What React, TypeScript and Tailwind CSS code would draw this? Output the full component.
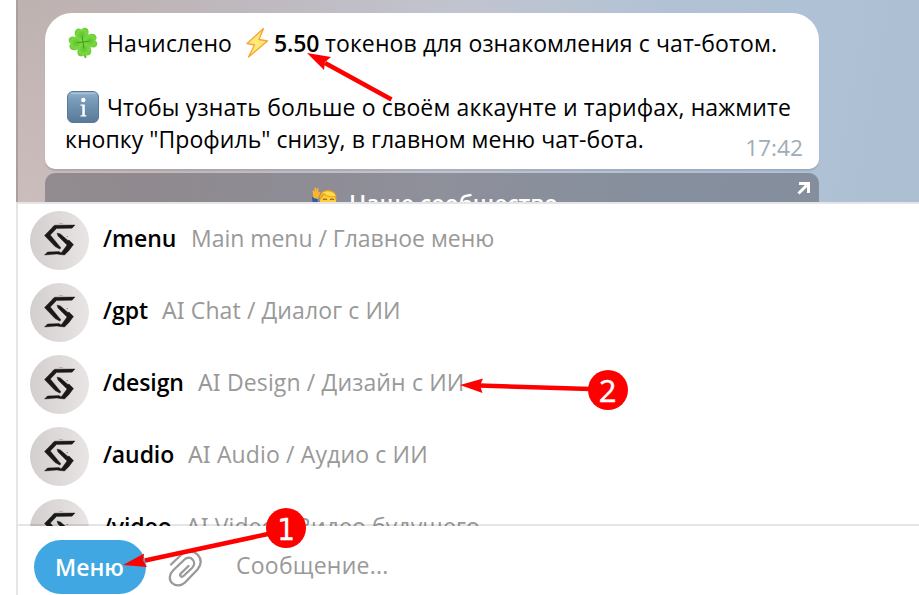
type Command = {
  name: string;
  nameClass: string;
  description: string;
  descriptionClass: string;
};

const COMMANDS: Command[] = [
  { name: '/menu', nameClass: 'w-[88px]', description: 'Main menu / Главное меню', descriptionClass: 'tracking-[-0.03px]' },
  { name: '/gpt', nameClass: 'w-[59px]', description: 'AI Chat / Диалог с ИИ', descriptionClass: 'tracking-[0.11px]' },
  { name: '/design', nameClass: 'w-[95px] tracking-[-0.1px]', description: 'AI Design / Дизайн с ИИ', descriptionClass: 'tracking-[0.14px]' },
  { name: '/audio', nameClass: 'w-[85px] tracking-[-0.1px]', description: 'AI Audio / Аудио с ИИ', descriptionClass: 'tracking-[0.14px]' },
  { name: '/video', nameClass: 'w-[83px] tracking-[-0.1px]', description: 'AI Video / Видео будущего', descriptionClass: 'tracking-[0.08px]' },
];

const CloverIcon = () => (
  <svg viewBox="0 0 30 32" className="h-8 w-[30px] shrink-0">
    <defs>
      <radialGradient id="leaf" cx="50%" cy="50%" r="60%">
        <stop offset="0" stopColor="#5fc22c" />
        <stop offset="0.6" stopColor="#7ad842" />
        <stop offset="1" stopColor="#68c832" />
      </radialGradient>
    </defs>
    <path d="M15 16 Q15 25 17.500 30" stroke="#67b832" strokeWidth="2.200" fill="none" strokeLinecap="round" />
    {[-8, 82, 172, 262].map((angle) => (
      <path
        key={angle}
        d="M15 15 C10 12.500 7.500 9 8 5 C8.500 1 13 -0.500 15.200 2.500 C18 -0.500 22.500 1.500 22 5.500 C21.500 10 19 12.500 15 15Z"
        fill="url(#leaf)"
        transform={`rotate(${angle} 15 15)`}
      />
    ))}
    {[-8, 82, 172, 262].map((angle) => (
      <path key={angle} d="M15 15 V9" stroke="#3e9e1a" strokeWidth="1" transform={`rotate(${angle} 15 15)`} />
    ))}
  </svg>
);

const BoltIcon = () => (
  <svg viewBox="0 0 24 32" className="h-8 w-6 shrink-0">
    <path d="M18.500 1.500 L2 16.500 L9.500 18 L3.500 30 L22.500 14 L14 12.500Z" fill="#ffe97a" stroke="#f8a42d" strokeWidth="1.300" strokeLinejoin="round" />
  </svg>
);

const InfoIcon = () => (
  <svg viewBox="0 0 32 32" className="h-8 w-8 shrink-0">
    <defs>
      <linearGradient id="info" x1="0" y1="0" x2="0" y2="1">
        <stop offset="0" stopColor="#96b3cb" />
        <stop offset="0.25" stopColor="#799dbd" />
        <stop offset="1" stopColor="#587896" />
      </linearGradient>
    </defs>
    <rect x="0.500" y="0.500" width="31" height="31" rx="5.500" fill="url(#info)" stroke="#597996" />
    <path d="M4 2.300 H28" stroke="#a9c2d6" strokeWidth="1.200" strokeLinecap="round" />
    <circle cx="16.300" cy="9" r="2.200" fill="#fff" />
    <path d="M13.500 13.500 H17.800 V24.300 H19.300 V25.500 H13.500 V24.300 H15.300 V14.700 H13.500Z" fill="#fff" />
  </svg>
);

const PersonIcon = () => (
  <svg viewBox="0 0 28 28" className="h-7 w-7 shrink-0">
    <path d="M1 10 L6 10 L8 20 L2 20Z" fill="#345b9c" />
    <path d="M2.500 11 L1.500 4 Q2 2.500 3 4 L3.500 5 L3.500 1 Q4.500 -0.500 5 1 L5.500 4 L6 1 Q7 0 7.300 2 L7.500 6 Q9 4 9.300 5.500 L8 9 L7 12Z" fill="#f8b72b" />
    <ellipse cx="17" cy="14" rx="8" ry="10" fill="#ffd03b" />
    <path d="M8.500 13 Q8 3 17 3 Q26 3 25.500 13 L23 10 Q17 11 13 8 Q12 11 8.500 13Z" fill="#eda620" />
    <path d="M10 7 Q14 3 20 5 Q24 6 24.500 9 Q17 10 13 6Z" fill="#ffda51" />
    <path d="M12 12.500 Q14 11.500 16 12.500 M19 12.500 Q21 11.500 23 12.500" stroke="#77521c" strokeWidth="1.200" fill="none" />
  </svg>
);

const Avatar = () => (
  <div className="flex size-[59px] shrink-0 rounded-full bg-linear-to-r from-[#d2cfce] to-[#e9e5e4]">
    <svg viewBox="0 0 59 59" className="size-[59px]" fill="#1b1918" stroke="#1b1918" strokeWidth="0.400">
      <path d="M24.500 14.200 L45 14 L42 17.200 L26.500 17.500 L20.300 24 L31 37 L29.500 38 L25 35.500 L14.500 24.500Z" />
      <path d="M27 22 L30.500 23 L38 29.500 L39 29 L43.500 33.500 L39 39.500 L34.500 44 L30 43.500 L31.500 41.500 L37 34 L28 25Z" />
      <path d="M17.500 41 L29 40.600 L31.500 42 L30 43.500 L27 43 L14.500 44Z" />
      <path d="M29 12.400 H33 V12.900 H29Z M36.500 25 H38 V26 H36.500Z M22.500 15 H24.500 V16 H22.500Z" opacity="0.400" stroke="none" />
    </svg>
  </div>
);

const PaperclipIcon = () => (
  <svg viewBox="0 0 36 40" className="h-10 w-9" fill="none" stroke="#999" strokeWidth="2.300" strokeLinecap="round">
    <path d="M3 15.500 L14 5 C18 1.500 25 1.500 29.500 5.500 C34 10 33.500 16 29.500 20.500 L17 33.500 C13.500 37 7.500 37.500 4 34 C0.500 30.500 1.500 25 5 21.500 L16.500 10.500 C19 8 22.500 8 24.500 10.500 C27 13 26.500 16.500 24 19 L15.500 27 C13.500 28.800 11 26.500 12.800 24.500 L20.500 17" />
  </svg>
);

// Red callout arrows and their numbered badges
const Annotations = () => (
  <svg viewBox="0 0 919 595" className="pointer-events-none absolute inset-0 h-[595px] w-[919px]" fill="#f00">
    <path d="M391.500 99.500 L325 63" stroke="#f00" strokeWidth="4.500" />
    <path d="M307 53 L331 57 L325 62 L324 70Z" />
    <path d="M590 389 L479 385.500" stroke="#f00" strokeWidth="4.500" />
    <path d="M460 385 L483 378.500 L480 385.500 L482.500 393Z" />
    <path d="M268 534 L145 560.500" stroke="#f00" strokeWidth="4.500" />
    <path d="M123 565 L144 553.500 L143 560.500 L147 567Z" />
    <circle cx="286" cy="528" r="20" />
    <circle cx="608" cy="390" r="20" />
    <g fill="#fff" stroke="#fff" strokeWidth="0.300" fontSize="31" textAnchor="middle">
      <text x="286" y="539.500" fontFamily="'DejaVu Sans Condensed', 'DejaVu Sans', sans-serif">1</text>
      <text x="607.500" y="401.500" fontFamily="'Noto Sans', sans-serif">2</text>
    </g>
  </svg>
);

export default function App() {
  return (
    <div className="relative flex h-[595px] w-[919px] flex-col overflow-hidden bg-white pl-4 font-['Open_Sans',sans-serif] text-[23px] leading-8 text-black">
      <div className="h-[202px] shrink-0 overflow-hidden border-l-2 border-[#aaa0a1] bg-[radial-gradient(circle_at_0%_100%,#cbbdbb_0%,#cbbdbb00_30%),linear-gradient(100deg,#b9adac_0%,#bfb9bf_25%,#c1c4cf_48%,#b1c2d5_70%,#afc1d4_90%,#abbed2_100%)] pt-[13px] pl-[27px]">
        <div className="flex h-[156px] w-[774px] flex-col rounded-t-[27px] rounded-b-[10px] bg-white pt-[14px] pl-5 whitespace-nowrap shadow-[0_2px_1px_rgba(90,90,110,0.2)]">
          <div className="flex h-8 items-center">
            <div className="flex w-[42px] pl-[3px]"><CloverIcon /></div>
            <span className="w-[138px] tracking-[0.14px]">Начислено</span>
            <BoltIcon />
            <b className="ml-[5px] w-[51px] font-semibold tracking-[-0.1px]">5.50</b>
            <span className="tracking-[0.11px]">токенов для ознакомления с чат-ботом.</span>
          </div>
          <div className="mt-8 flex h-8 items-center">
            <div className="flex w-[42px] pl-[2px]"><InfoIcon /></div>
            <span className="tracking-[0.145px]">Чтобы узнать больше о своём аккаунте и тарифах, нажмите</span>
          </div>
          <div className="flex h-8 justify-between pr-4">
            <span className="tracking-[0.05px]">кнопку "Профиль" снизу, в главном меню чат-бота.</span>
            <span className="pt-[9px] text-[22.700px] text-[#a0acb6]">17:42</span>
          </div>
        </div>
        <div className="mt-1 flex h-[54px] w-[774px] rounded-[10px] bg-[#5b5b66]/50 pt-[14px] text-white">
          <div className="ml-[266px] w-[38px]"><PersonIcon /></div>
          <span className="grow font-semibold tracking-[-0.12px]">Наше сообщество</span>
          <svg viewBox="0 0 14 14" className="-mt-[6px] mr-2 size-[14px]" fill="none" stroke="#fff" strokeWidth="3">
            <path d="M2 2.500 H11.500 V12 M11.500 2.500 L1.500 12.500" />
          </svg>
        </div>
      </div>

      <div className="relative h-[324px] shrink-0 overflow-hidden border-t-2 border-l-2 border-[#e5e5e5] pt-[7px] pl-3">
        {COMMANDS.map(({ name, nameClass, description, descriptionClass }) => (
          <div key={name} className="flex h-[72px] items-start whitespace-nowrap">
            <Avatar />
            <div className="flex pt-[11px] pl-[14px]">
              <span className={`font-semibold ${nameClass}`}>{name}</span>
              <span className={`text-[#999] ${descriptionClass}`}>
                {description.startsWith('AI') ? (
                  <>
                    <span className="font-['Noto_Sans',sans-serif]">AI</span>
                    {description.slice(2)}
                  </>
                ) : (
                  description
                )}
              </span>
            </div>
          </div>
        ))}
        <div className="absolute inset-x-0 bottom-0 h-0.5 bg-black/10" />
      </div>

      <div className="flex h-[69px] shrink-0 items-start border-l-2 border-[#e5e5e5] pl-4">
        <button className="mt-[14px] h-[54px] w-28 rounded-full bg-[#40a7e3] pr-[1px] font-semibold text-white">Меню</button>
        <div className="mt-[23px] ml-[22px]"><PaperclipIcon /></div>
        <span className="mt-[23px] ml-8 tracking-[0.24px] text-[#999]">Сообщение...</span>
      </div>

      <Annotations />
    </div>
  );
}
